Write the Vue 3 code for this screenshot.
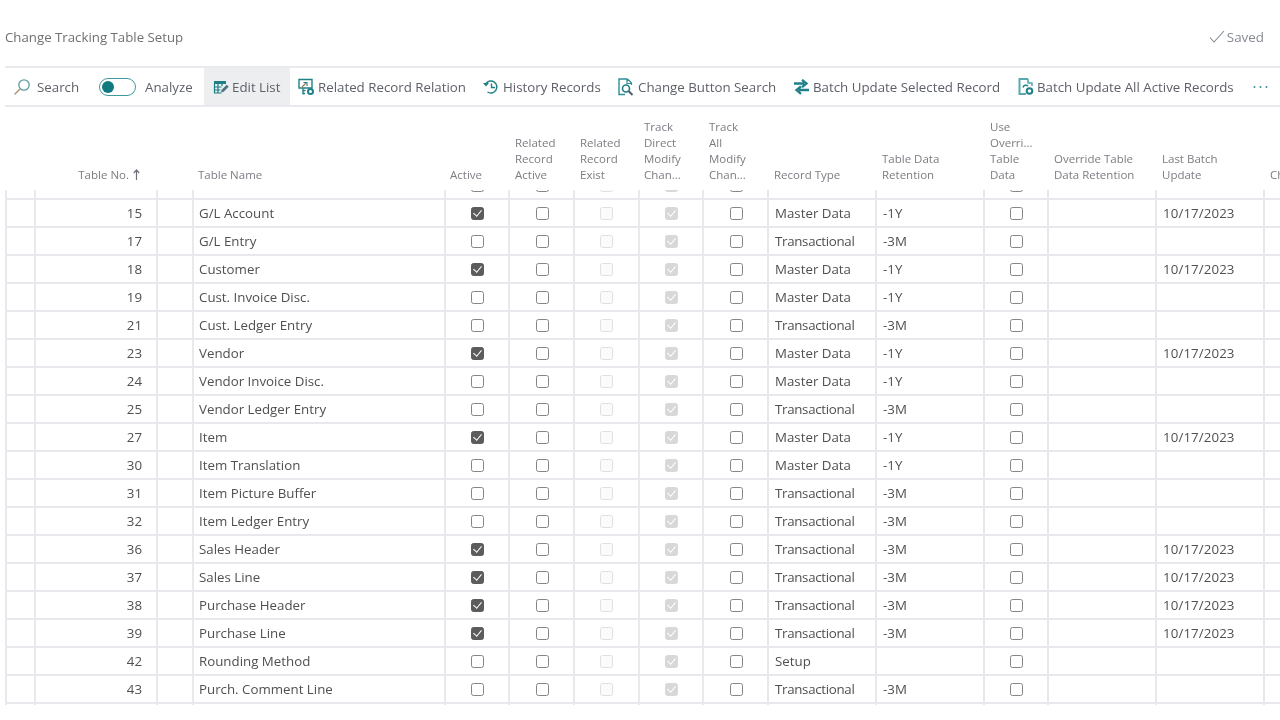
<script setup>
const rows = [
  ['15','G/L Account',1,'Master Data','-1Y','10/17/2023'],
  ['17','G/L Entry',0,'Transactional','-3M',''],
  ['18','Customer',1,'Master Data','-1Y','10/17/2023'],
  ['19','Cust. Invoice Disc.',0,'Master Data','-1Y',''],
  ['21','Cust. Ledger Entry',0,'Transactional','-3M',''],
  ['23','Vendor',1,'Master Data','-1Y','10/17/2023'],
  ['24','Vendor Invoice Disc.',0,'Master Data','-1Y',''],
  ['25','Vendor Ledger Entry',0,'Transactional','-3M',''],
  ['27','Item',1,'Master Data','-1Y','10/17/2023'],
  ['30','Item Translation',0,'Master Data','-1Y',''],
  ['31','Item Picture Buffer',0,'Transactional','-3M',''],
  ['32','Item Ledger Entry',0,'Transactional','-3M',''],
  ['36','Sales Header',1,'Transactional','-3M','10/17/2023'],
  ['37','Sales Line',1,'Transactional','-3M','10/17/2023'],
  ['38','Purchase Header',1,'Transactional','-3M','10/17/2023'],
  ['39','Purchase Line',1,'Transactional','-3M','10/17/2023'],
  ['42','Rounding Method',0,'Setup','',''],
  ['43','Purch. Comment Line',0,'Transactional','-3M',''],
]
</script>

<template>
  <div class="page">
    <div class="titlebar">
      <span class="title">Change Tracking Table Setup</span>
      <span class="saved">
        <svg width="16" height="14" viewBox="0 0 16 14"><path d="M1 7.500 5 12 15 1" fill="none" stroke="#858a92" stroke-width="1.100"/></svg>
        Saved
      </span>
    </div>
    <div class="toolbar">
      <div class="tool search">
        <svg width="18" height="18" viewBox="0 0 18 18"><circle cx="11" cy="7" r="5.200" fill="none" stroke="#5f9aa0" stroke-width="1.300"/><path d="M7 11 1.500 16.500" stroke="#b59a7a" stroke-width="1.600"/></svg>
        <span>Search</span>
      </div>
      <div class="tool analyze">
        <span class="switch"><span class="knob"></span></span>
        <span>Analyze</span>
      </div>
      <div class="tool edit">
        <svg width="16" height="16" viewBox="0 0 16 16"><path d="M1 2h12v3H1z" fill="#1f7f86"/><path d="M1.500 5v9h7M5 5v9M9 5v2M1.500 8h7M1.500 11h6" fill="none" stroke="#1f7f86" stroke-width="1.200"/><path d="M8 13.500l.7-2.700 5-5 2 2-5 5z" fill="#4f7580"/></svg>
        <span>Edit List</span>
      </div>
      <div class="tool rel">
        <svg width="17" height="18" viewBox="0 0 17 18"><path d="M1 1.500h13v8.500H1z" fill="none" stroke="#1f8087" stroke-width="1.400"/><path d="M4 9 8 5" stroke="#b2764f" stroke-width="1.300"/><path d="M5.500 4.500H9V8" fill="none" stroke="#1f8087" stroke-width="1.100"/><path d="M5 10.500v6M5 12.500h2.500M5 15.500h2" fill="none" stroke="#1f8087" stroke-width="1.400"/><circle cx="12.500" cy="13.500" r="2.500" fill="none" stroke="#1f8087" stroke-width="2"/></svg>
        <span>Related Record Relation</span>
      </div>
      <div class="tool hist">
        <svg width="16" height="16" viewBox="0 0 16 16"><path d="M3 4.500A6 6 0 1 1 4.500 13" fill="none" stroke="#1f8087" stroke-width="1.500"/><path d="M0 7h6L3 3.500z" fill="#1f8087" transform="rotate(180 3 5.500)"/><path d="M8.500 4.500v4H12" fill="none" stroke="#1f8087" stroke-width="1.400"/></svg>
        <span>History Records</span>
      </div>
      <div class="tool chg">
        <svg width="16" height="18" viewBox="0 0 16 18"><path d="M9.500 1H1v15.500h6" fill="none" stroke="#2f8f95" stroke-width="1.400"/><path d="M9.500 1 13.500 5V7M9 1v4.500h4.500" fill="none" stroke="#2f8f95" stroke-width="1.200"/><circle cx="8" cy="10.500" r="3.500" fill="none" stroke="#1f7f86" stroke-width="1.600"/><path d="M10.500 13 14.500 17" stroke="#4d5f6d" stroke-width="1.900"/></svg>
        <span>Change Button Search</span>
      </div>
      <div class="tool up1">
        <svg width="15" height="16" viewBox="0 0 15 16"><path d="M0 4.500h10M8 .8 12.500 4.500 8 8.200" fill="none" stroke="#1f8087" stroke-width="2.300"/><path d="M15 11H5M7 7.500 2.500 11 7 14.800" fill="none" stroke="#1f8087" stroke-width="2.300"/></svg>
        <span>Batch Update Selected Record</span>
      </div>
      <div class="tool up2">
        <svg width="16" height="18" viewBox="0 0 16 18"><path d="M10 1H1.500v15H8" fill="none" stroke="#5aa8ae" stroke-width="2"/><path d="M10 1v4h4v3" fill="#a9d2d5" stroke="#5aa8ae" stroke-width="1.500"/><path d="M5 9.500a3 3 0 0 1 5-1.500" fill="none" stroke="#1f8087" stroke-width="1.500"/><circle cx="11.500" cy="13" r="2.800" fill="none" stroke="#1f8087" stroke-width="2"/></svg>
        <span>Batch Update All Active Records</span>
      </div>
      <div class="more">
        <svg width="15" height="4" viewBox="0 0 15 4"><circle cx="1.500" cy="2" r="1" fill="#3f9298"/><circle cx="7.500" cy="2" r="1" fill="#3f9298"/><circle cx="13.500" cy="2" r="1" fill="#3f9298"/></svg>
      </div>
    </div>
    <div class="gridwrap">
      <div class="row head">
        <div></div><div></div>
        <div class="hc right">Table No.<svg class="arrow" width="7" height="11" viewBox="0 0 7 11"><path d="M3.500 1v10M.8 4 3.500 1 6.200 4" fill="none" stroke="#6d7076" stroke-width="1.200"/></svg></div>
        <div></div>
        <div class="hc p6">Table Name</div>
        <div class="hc p6">Active</div>
        <div class="hc">Related<br>Record<br>Active</div>
        <div class="hc">Related<br>Record<br>Exist</div>
        <div class="hc p6">Track<br>Direct<br>Modify<br>Chan...</div>
        <div class="hc">Track<br>All<br>Modify<br>Chan...</div>
        <div class="hc">Record Type</div>
        <div class="hc">Table Data<br>Retention</div>
        <div class="hc">Use<br>Overri...<br>Table<br>Data</div>
        <div class="hc">Override Table<br>Data Retention</div>
        <div class="hc">Last Batch<br>Update</div>
        <div class="hc clip">Change</div>
      </div>
      <div class="body">
        <div class="row data top">
          <div class="c none"></div><div class="c"></div><div class="c"></div><div class="c"></div><div class="c"></div>
          <div class="c mid"><i class="cb"></i></div>
          <div class="c mid nudge"><i class="cb"></i></div>
          <div class="c mid"><i class="cb off"></i></div>
          <div class="c mid"><i class="cb off on"></i></div>
          <div class="c mid nudge"><i class="cb"></i></div>
          <div class="c"></div><div class="c"></div>
          <div class="c mid"><i class="cb"></i></div>
          <div class="c"></div>
          <div class="c tx date"><span class="prev">10/16/2023</span></div>
          <div class="c end"></div>
        </div>
        <div class="row data" v-for="r in rows" :key="r[0]">
          <div class="c none"></div>
          <div class="c"></div>
          <div class="c tx right">{{ r[0] }}</div>
          <div class="c"></div>
          <div class="c tx name">{{ r[1] }}</div>
          <div class="c mid"><i class="cb" :class="{ on: r[2] }"></i></div>
          <div class="c mid nudge"><i class="cb"></i></div>
          <div class="c mid"><i class="cb off"></i></div>
          <div class="c mid"><i class="cb off on"></i></div>
          <div class="c mid nudge"><i class="cb"></i></div>
          <div class="c tx" :class="{ tight: r[3] === 'Transactional' }">{{ r[3] }}</div>
          <div class="c tx">{{ r[4] }}</div>
          <div class="c mid"><i class="cb"></i></div>
          <div class="c"></div>
          <div class="c tx dt">{{ r[5] }}</div>
          <div class="c end"></div>
        </div>
        <div class="row tail">
          <div></div><div class="t"></div><div class="t"></div><div class="t"></div><div class="t"></div>
          <div class="t"></div><div class="t"></div><div class="t"></div><div class="t"></div><div class="t"></div>
          <div class="t"></div><div class="t"></div><div class="t"></div><div class="t"></div><div class="t"></div><div class="t"></div>
        </div>
      </div>
    </div>
  </div>
</template>

<style>
html, body { margin: 0; background: #fff; }
</style>

<style scoped>
.page {
  width: 1280px;
  height: 720px;
  overflow: hidden;
  background: #fff;
  font-family: "Open Sans", "Noto Sans", sans-serif;
  font-size: 13px;
  color: #505050;
  filter: blur(0.3px);
}
.titlebar {
  height: 68px;
  box-sizing: border-box;
  margin-left: 5px;
  padding: 28px 16px 0 0;
  display: flex;
  justify-content: space-between;
  align-items: flex-start;
  border-bottom: 2px solid #e9eaed;
}
.title { font-size: 13.25px; line-height: 18px; color: #707070; }
.saved { display: flex; align-items: center; gap: 2px; font-size: 13.4px; line-height: 18px; color: #858a92; }
.toolbar {
  margin-left: 5px;
  height: 39px;
  box-sizing: border-box;
  border-bottom: 2px solid #e9eaed;
  display: flex;
  align-items: stretch;
  font-size: 13.3px;
  color: #5d6168;
  white-space: nowrap;
}
.tool { display: flex; align-items: center; box-sizing: border-box; }
.search { width: 94px; padding-left: 8px; gap: 6px; }
.analyze { width: 105px; gap: 9px; }
.switch {
  width: 37px; height: 18px; box-sizing: border-box;
  border: 1.5px solid #3f9aa0; border-radius: 9px;
  display: flex; align-items: center; padding-left: 2px;
}
.knob { width: 12px; height: 12px; border-radius: 50%; background: #0f7a80; }
.edit { width: 86px; padding-left: 9px; gap: 3px; background: #edeef0; }
.rel { width: 193px; padding-left: 8px; gap: 3px; }
.hist { width: 135px; gap: 4px; }
.chg { width: 176px; gap: 4px; }
.up1 { width: 224px; gap: 4px; }
.up2 { width: 235px; gap: 3px; }
.more { display: flex; align-items: center; }
.row {
  display: grid;
  grid-template-columns: 5px 29px 122px 36px 252px 64px 65px 65px 64px 65px 108px 108px 64px 108px 108px 17px;
}
.head { height: 83px; font-size: 11.5px; color: #7a7d82; line-height: 16px; }
.hc { align-self: end; padding: 0 2px 7px 7px; white-space: nowrap; }
.hc.p6 { padding-left: 6px; }
.hc.right { text-align: right; padding-right: 16px; }
.hc.clip { overflow: hidden; padding-right: 0; }
.arrow { margin-left: 4px; vertical-align: -1px; }
.body { height: 515px; overflow: hidden; }
.data { height: 28px; font-size: 13.3px; color: #505050; }
.c {
  box-sizing: border-box; height: 28px;
  border-left: 2px solid #e8e9ec; border-bottom: 2px solid #e8e9ec;
  line-height: 26px; min-width: 0;
}
.c.none { border-left: 0; border-bottom: 0; }
.top { height: 10px; }
.top .c { height: 10px; line-height: 0; }
.prev { display: block; line-height: 26px; margin-top: -18px; }
.tx { padding: 0 6px; white-space: nowrap; }
.tx.right { text-align: right; padding-right: 14px; }
.tx.name { padding-left: 5px; }
.tx.dt, .prev { letter-spacing: 0.1px; }
.tight { letter-spacing: -0.3px; }
.mid { display: flex; align-items: center; justify-content: center; }
.mid.nudge { padding-left: 1px; }
.top .mid { align-items: flex-end; padding-bottom: 6px; }
.tail { height: 1px; }
.t { border-left: 2px solid #e8e9ec; height: 1px; }
.cb {
  display: block; width: 13px; height: 13px; box-sizing: border-box;
  border: 1.2px solid #858585; border-radius: 2.5px; background: #fff; position: relative; flex: none;
}
.cb.on { background: #5c5c5c; border-color: #5c5c5c; }
.cb.on::after {
  content: ""; position: absolute; left: 3.3px; top: 0.6px; width: 3.5px; height: 7px;
  border: solid #fff; border-width: 0 1.6px 1.6px 0; transform: rotate(40deg); box-sizing: content-box;
}
.cb.off { border-color: #e0e0e0; background: #fbfbfb; }
.cb.off.on { background: #d8d8d8; border-color: #d8d8d8; }
</style>
